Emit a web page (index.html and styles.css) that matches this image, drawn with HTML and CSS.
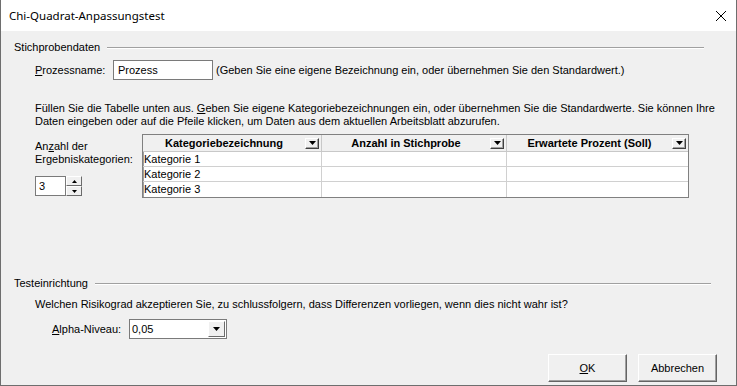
FILE: index.html
```html
<!DOCTYPE html>
<html lang="de">
<head>
    <meta charset="UTF-8">
    <title>Chi-Quadrat-Anpassungstest</title>
    <link rel="stylesheet" href="styles.css">
</head>
<body>
    <div class="window">
        <div class="titlebar">
            <span class="title">Chi-Quadrat-Anpassungstest</span>
            <svg class="close" width="10" height="10" viewBox="0 0 10 10"><path d="M0 0 L10 10 M10 0 L0 10" stroke="#000" stroke-width="1"/></svg>
        </div>

        <div class="client">
            <div class="group-head head-1"><span>Stichprobendaten</span><i class="rule"></i></div>

            <div class="row name-row">
                <label class="lbl"><u>P</u>rozessname:</label>
                <div class="textbox name-box">Prozess</div>
                <span class="hint">(Geben Sie eine eigene Bezeichnung ein, oder übernehmen Sie den Standardwert.)</span>
            </div>

            <p class="info">Füllen Sie die Tabelle unten aus. <u>G</u>eben Sie eigene Kategoriebezeichnungen ein, oder übernehmen Sie die Standardwerte. Sie können Ihre<br>Daten eingeben oder auf die Pfeile klicken, um Daten aus dem aktuellen Arbeitsblatt abzurufen.</p>

            <div class="data-row">
                <div class="count">
                    <div class="count-lbl">An<u>z</u>ahl der<br>Ergebniskategorien:</div>
                    <div class="spin">
                        <div class="textbox spin-box">3</div>
                        <div class="spin-btns">
                            <div class="spin-btn"><svg width="5" height="3" viewBox="0 0 5 3"><path d="M2.5 0 L5 3 L0 3 Z" fill="#000"/></svg></div>
                            <div class="spin-btn"><svg width="5" height="3" viewBox="0 0 5 3"><path d="M0 0 L5 0 L2.5 3 Z" fill="#000"/></svg></div>
                        </div>
                    </div>
                </div>

                <div class="grid">
                    <div class="hd c1"><span>Kategoriebezeichnung</span><b class="dd"><svg width="7" height="4" viewBox="0 0 7 4"><path d="M0 0 L7 0 L3.5 4 Z" fill="#000"/></svg></b></div>
                    <div class="hd c2"><span>Anzahl in Stichprobe</span><b class="dd"><svg width="7" height="4" viewBox="0 0 7 4"><path d="M0 0 L7 0 L3.5 4 Z" fill="#000"/></svg></b></div>
                    <div class="hd c3"><span>Erwartete Prozent (Soll)</span><b class="dd"><svg width="7" height="4" viewBox="0 0 7 4"><path d="M0 0 L7 0 L3.5 4 Z" fill="#000"/></svg></b></div>

                    <div class="cell">Kategorie 1</div><div class="cell"></div><div class="cell"></div>
                    <div class="cell">Kategorie 2</div><div class="cell"></div><div class="cell"></div>
                    <div class="cell">Kategorie 3</div><div class="cell"></div><div class="cell"></div>
                </div>
            </div>

            <div class="group-head head-2"><span>Testeinrichtung</span><i class="rule"></i></div>

            <p class="question">Welchen Risikograd akzeptieren Sie, zu schlussfolgern, dass Differenzen vorliegen, wenn dies nicht wahr ist?</p>

            <div class="row alpha-row">
                <label class="lbl"><u>A</u>lpha-Niveau:</label>
                <div class="combo">
                    <span>0,05</span>
                    <b class="combo-btn"><svg width="7" height="4" viewBox="0 0 7 4"><path d="M0 0 L7 0 L3.5 4 Z" fill="#000"/></svg></b>
                </div>
            </div>

            <div class="buttons">
                <div class="btn"><u>O</u>K</div>
                <div class="btn">Abbrechen</div>
            </div>
        </div>
    </div>
</body>
</html>
```

FILE: styles.css
```css
:root { --face: #f0f0f0; --text: #000; --rule: #a0a0a0; --edge: #7a7a7a; --font: "Liberation Sans", Arial, sans-serif; }
* { box-sizing: border-box; }
body { margin: 0; background: var(--face); font-family: var(--font); font-size: 11px; color: var(--text); }
u { text-decoration: underline; text-underline-offset: 1px; }

.window { width: 737px; height: 386px; border: 1px solid #6e6e6e; border-top: none; background: var(--face); display: flex; flex-direction: column; overflow: hidden; }

.titlebar { height: 31px; background: #fff; display: flex; align-items: center; justify-content: space-between; padding: 0 10px 0 8px; flex: none; }
.title { font-family: "Noto Sans", "Open Sans", sans-serif; font-size: 11.5px; }
.close { display: block; }

.client { flex: 1; padding: 10px 0 0 13px; display: flex; flex-direction: column; }

/* gruppen-ueberschrift mit linie */
.group-head { display: flex; align-items: center; height: 13px; line-height: 13px; }
.group-head .rule { flex: 1; height: 2px; border-top: 1px solid var(--rule); border-bottom: 1px solid #fff; margin-left: 7px; }
.head-1 { margin-right: 32px; }
.head-2 { margin-right: 25px; margin-top: 79px; }

.row { display: flex; align-items: center; padding-left: 21px; }
.lbl { line-height: 13px; }
.name-row { margin-top: 6px; }
.name-row .lbl { width: 78px; }
.textbox { background: #fff; border: 1px solid var(--edge); line-height: 18px; padding-left: 4px; }
.name-box { width: 100px; height: 20px; }
.hint { margin-left: 3px; }

.info { margin: 22px 0 0 21px; line-height: 13px; }

.data-row { display: flex; align-items: flex-start; padding-left: 21px; margin-top: 6px; }
.count { width: 107px; padding-top: 6px; }
.count-lbl { line-height: 13px; }
.spin { display: flex; margin-top: 10px; }
.spin-box { width: 31px; height: 20px; padding-left: 3px; }
.spin-btns { display: flex; flex-direction: column; }
.spin-btn { width: 16px; height: 10px; background: var(--face); border: 1px solid; border-color: #fff #6b6b6b #6b6b6b #fff; display: flex; align-items: center; justify-content: center; }

.grid { display: grid; grid-template-columns: 179px 185px 181px; grid-auto-rows: 15px; grid-template-rows: 17px; border: 1px solid #808080; box-shadow: inset 1px 1px 0 #a0a0a0; background: #fff; }
.hd { background: var(--face); font-weight: bold; display: flex; align-items: center; border-right: 1px solid #c8c8c8; border-bottom: 1px solid #c8c8c8; padding-right: 2px; }
.hd span { flex: 1; text-align: center; }
.dd { width: 14px; height: 11px; border: 1px solid; border-color: #fff #404040 #404040 #fff; background: var(--face); display: flex; align-items: center; justify-content: center; box-shadow: inset -1px -1px 0 #a0a0a0; }
.cell { border-right: 1px solid #d0d0d0; border-bottom: 1px solid #d0d0d0; padding-left: 1px; line-height: 14px; white-space: nowrap; }
.grid > :nth-child(3n) { border-right: none; }
.grid > :nth-last-child(-n+3) { border-bottom: none; }

.question { margin: 8px 0 0 21px; line-height: 13px; }

.alpha-row { margin-top: 8px; padding-left: 38px; }
.alpha-row .lbl { width: 77px; }
.combo { width: 98px; height: 20px; background: #fff; border: 1px solid var(--edge); display: flex; align-items: center; justify-content: space-between; padding: 0 1px 0 2px; }
.combo-btn { width: 17px; height: 16px; border: 1px solid; border-color: #fff #6b6b6b #6b6b6b #fff; background: var(--face); display: flex; align-items: center; justify-content: center; }

.buttons { display: flex; justify-content: flex-end; gap: 11px; margin-top: 15px; padding-right: 19px; }
.btn { width: 79px; height: 28px; background: var(--face); border: 1px solid; border-color: #fff #646464 #646464 #fff; box-shadow: inset -1px -1px 0 #a0a0a0; display: flex; align-items: center; justify-content: center; }
```
